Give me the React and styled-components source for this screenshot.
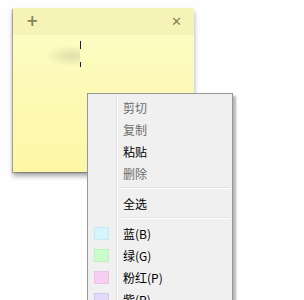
import React from "react";
import styled, { createGlobalStyle } from "styled-components";

const Global = createGlobalStyle`
  html, body {
    margin: 0;
    background: #fefefe;
    overflow: hidden;
  }
  body {
    font-family: "Noto Sans CJK SC", "Liberation Sans", sans-serif;
  }
`;

const Desk = styled.div`
  position: relative;
  width: 304px;
  height: 300px;
  padding: 8px 0 0 13px;
  box-sizing: border-box;
`;

const Note = styled.div`
  width: 181px;
  height: 164px;
  display: flex;
  flex-direction: column;
  background: linear-gradient(#fdfdc8, #fdf7a4);
  box-shadow: -1px 1px 1px rgba(0, 0, 0, 0.25), 0 4px 5px rgba(0, 0, 0, 0.35);
`;

const NoteBar = styled.div`
  height: 27px;
  display: flex;
  align-items: center;
  justify-content: space-between;
  padding: 0 12px 0 13px;
  background: #f6f3b6;
  color: #85835c;
  font-family: "DejaVu Sans", sans-serif;
  font-weight: bold;
`;

const BarIcon = styled.span`
  font-size: ${(p) => p.size}px;
  line-height: 1;
`;

const NoteBody = styled.div`
  flex: 1;
  display: flex;
  align-items: flex-start;
  padding: 6px 0 0 32px;
`;

const Smudge = styled.div`
  width: 35px;
  height: 22px;
  margin-top: 4px;
  background: radial-gradient(ellipse at 75% 50%, rgba(205, 205, 160, 0.6), rgba(250, 250, 200, 0) 70%);
`;

const CaretCol = styled.div`
  display: flex;
  flex-direction: column;
  gap: 13px;
`;

const Caret = styled.div`
  width: 1px;
  height: ${(p) => p.h}px;
  background: #1a1a50;
`;

const Menu = styled.div`
  position: absolute;
  left: 87px;
  top: 93px;
  width: 140px;
  padding: 2px;
  border: 1px solid #979797;
  background: linear-gradient(
    to right,
    #f0f0f0 28px,
    #e2e2e2 28px,
    #e2e2e2 29px,
    #ffffff 29px,
    #ffffff 30px,
    #f0f0f0 30px
  );
  box-shadow: 3px 3px 2px rgba(0, 0, 0, 0.28);
  font-size: 12px;
`;

const Item = styled.div`
  height: 22px;
  display: grid;
  grid-template-columns: 33px 1fr;
  align-items: center;
  color: ${(p) => (p.disabled ? "#6d6d6d" : "#000")};
`;

const Swatch = styled.span`
  justify-self: start;
  margin-left: 4px;
  width: 15px;
  height: 13px;
  background: ${(p) => p.color};
  border: 1px solid ${(p) => p.edge};
  box-sizing: border-box;
`;

const Sep = styled.div`
  height: 8px;
  display: flex;
  align-items: center;
  padding-left: 31px;
  &::after {
    content: "";
    flex: 1;
    height: 1px;
    background: #e2e2e2;
    border-bottom: 1px solid #fff;
  }
`;

const colors = [
  { label: "蓝(B)", color: "#d6f4fc", edge: "#c8e8f2" },
  { label: "绿(G)", color: "#cbfccb", edge: "#bdf0bd" },
  { label: "粉红(P)", color: "#f6cff3", edge: "#ecc2e8" },
  { label: "紫(P)", color: "#e2d9fb", edge: "#d4caf0" },
];

const edits = [
  { label: "剪切", disabled: true },
  { label: "复制", disabled: true },
  { label: "粘贴", disabled: false },
  { label: "删除", disabled: true },
];

export default function App() {
  return (
    <Desk>
      <Global />
      <Note>
        <NoteBar>
          <BarIcon size={15}>+</BarIcon>
          <BarIcon size={13}>✕</BarIcon>
        </NoteBar>
        <NoteBody>
          <Smudge />
          <CaretCol>
            <Caret h={8} />
            <Caret h={5} />
          </CaretCol>
        </NoteBody>
      </Note>
      <Menu>
        {edits.map((e) => (
          <Item key={e.label} disabled={e.disabled}>
            <span />
            {e.label}
          </Item>
        ))}
        <Sep />
        <Item>
          <span />
          全选
        </Item>
        <Sep />
        {colors.map((c) => (
          <Item key={c.label}>
            <Swatch color={c.color} edge={c.edge} />
            {c.label}
          </Item>
        ))}
      </Menu>
    </Desk>
  );
}
